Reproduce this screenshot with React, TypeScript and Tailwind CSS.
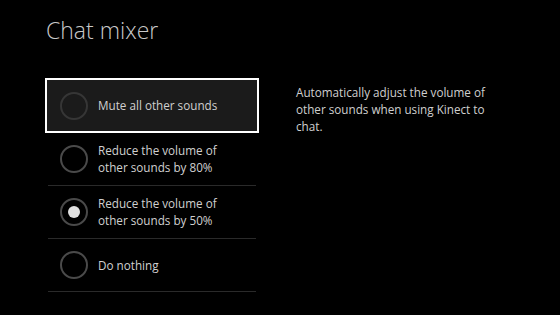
const options = [
  { label: ["Mute all other sounds"], focused: true },
  { label: ["Reduce the volume of", "other sounds by 80%"] },
  { label: ["Reduce the volume of", "other sounds by 50%"], checked: true },
  { label: ["Do nothing"] },
];

function Radio({ checked, focused }: { checked?: boolean; focused?: boolean }) {
  return (
    <div
      className={`w-[28px] h-[28px] rounded-full border-2 flex items-center justify-center flex-shrink-0 ${
        focused ? "border-[#363636]" : "border-[#4a4a4a]"
      }`}
    >
      {checked && <div className="w-[12px] h-[12px] rounded-full bg-[#e0e0e0]" />}
    </div>
  );
}

export default function App() {
  return (
    <div
      className="w-[560px] h-[315px] bg-black text-[#d0d0d0] overflow-hidden"
      style={{ fontFamily: '"Open Sans", "Noto Sans", sans-serif' }}
    >
      <h1 className="pl-[46px] pt-[15px] text-[23px] font-light leading-[30px] text-[#c8c8c8]">Chat mixer</h1>
      <div className="flex mt-[33px]">
        <div className="ml-[45px] w-[214px] flex flex-col">
          {options.map((o, i) => (
            <div
              key={i}
              className={
                o.focused
                  ? "h-[55px] border-2 border-white bg-[#1b1b1b] flex items-center gap-[10px] pl-[13px]"
                  : "h-[53px] mx-[3px] border-b border-[#2a2a2a] flex items-center gap-[10px] pl-[12px]"
              }
            >
              <Radio checked={o.checked} focused={o.focused} />
              <div className="text-[11.7px] leading-[17px]">
                {o.label.map((l) => (
                  <div key={l}>{l}</div>
                ))}
              </div>
            </div>
          ))}
        </div>
        <p className="ml-[37px] mt-[6px] w-[205px] text-[11.7px] leading-[17px] text-[#cfcfcf]">
          Automatically adjust the volume of other sounds when using Kinect to chat.
        </p>
      </div>
    </div>
  );
}
